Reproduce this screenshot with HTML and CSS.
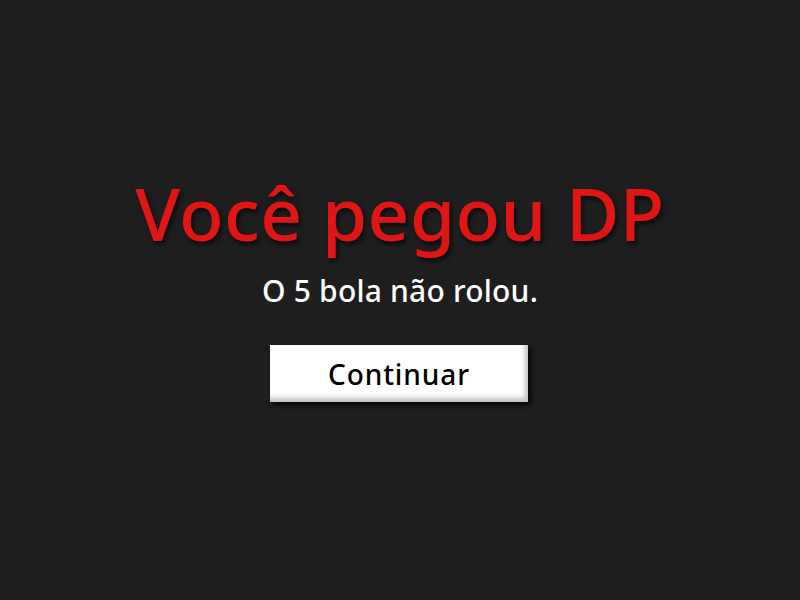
FILE: index.html
```html
<!DOCTYPE html>
<html lang="pt">
<head>
<meta charset="utf-8">
<link rel="stylesheet" href="styles.css">
</head>
<body>
<main class="screen">
  <h1 class="title">Você pegou DP</h1>
  <p class="subtitle">O 5 bola não rolou.</p>
  <button class="btn">Continuar</button>
</main>
</body>
</html>
```
FILE: styles.css
```css
html, body {
  margin: 0;
  padding: 0;
  height: 100%;
  background: #1e1e1e;
}
.screen {
  height: 600px;
  display: flex;
  flex-direction: column;
  align-items: center;
  font-family: "Noto Sans", "DejaVu Sans", sans-serif;
}
.title {
  margin: 163px 0 0;
  font-size: 73px;
  font-weight: 500;
  line-height: 100px;
  letter-spacing: 0.4px;
  color: #e01616;
  text-shadow: 2px 3px 4px rgba(0,0,0,0.7);
}
.subtitle {
  margin: 8px 0 0;
  font-size: 30px;
  font-weight: 500;
  line-height: 40px;
  letter-spacing: 0.2px;
  color: #ffffff;
}
.btn {
  margin-top: 34px;
  margin-left: -2px;
  width: 258px;
  height: 57px;
  border: none;
  background: #ffffff;
  font-family: inherit;
  font-size: 28px;
  font-weight: 500;
  letter-spacing: 0.9px;
  color: #000;
  box-shadow: inset -3px -4px 5px rgba(0,0,0,0.25), 3px 3px 5px rgba(0,0,0,0.8);
  padding: 0;
}
```
